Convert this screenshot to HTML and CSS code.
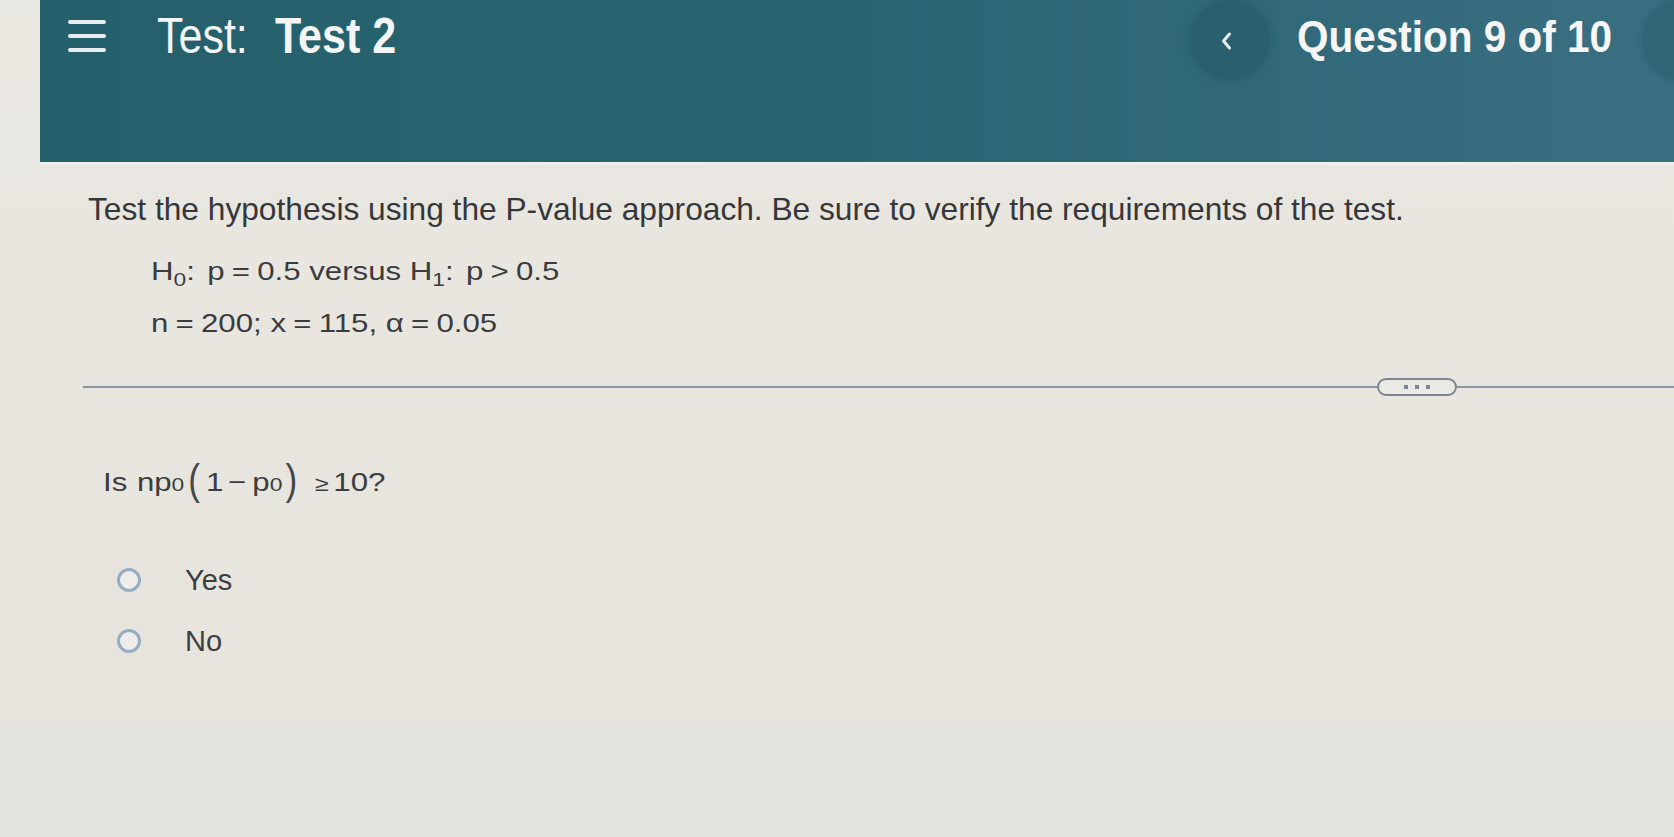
FILE: index.html
```html
<!DOCTYPE html>
<html>
<head>
<meta charset="utf-8">
<link rel="stylesheet" href="styles.css">
</head>
<body>
<div class="page">
  <header class="header">
    <div class="bar">
      <div class="left">
        <div class="burger"><span></span><span></span><span></span></div>
        <div class="title"><span class="t-label">Test:</span><span class="t-name">Test 2</span></div>
      </div>
      <div class="nav">
        <div class="circ">
          <svg width="16" height="22" viewBox="0 0 16 22"><path d="M10.5 4 L4.5 11 L10.5 18" fill="none" stroke="#e9eff2" stroke-width="3" stroke-linecap="round" stroke-linejoin="round"/></svg>
        </div>
        <div class="qnum"><span>Question 9 of 10</span></div>
        <div class="circ circ-r"></div>
      </div>
    </div>
  </header>
  <main class="content">
    <p class="prompt">Test the hypothesis using the P-value approach. Be sure to verify the requirements of the test.</p>
    <div class="math">
      <div class="mline">H<sub>0</sub><span class="colon">:</span> p<span class="op">=</span>0.5 versus H<sub>1</sub><span class="colon">:</span> p<span class="op">&gt;</span>0.5</div>
      <div class="mline">n<span class="op">=</span>200<span class="semi">;</span> x<span class="op">=</span>115, α<span class="op">=</span>0.05</div>
    </div>
    <div class="divider"><span class="line"></span><span class="pill"><i></i><i></i><i></i></span><span class="line line-r"></span></div>
    <div class="ask"><span class="is">Is</span><span class="np">np</span><sub>0</sub><span class="paren">(</span><span class="one">1</span><span class="minus">−</span><span class="p">p</span><sub>0</sub><span class="paren">)</span><span class="ge">≥</span><span class="ten">10?</span></div>
    <div class="options">
      <label class="opt"><span class="radio"></span><span class="otext">Yes</span></label>
      <label class="opt"><span class="radio"></span><span class="otext">No</span></label>
    </div>
  </main>
</div>
</body>
</html>
```
FILE: styles.css
```css
html, body {
  margin: 0;
  padding: 0;
}
body {
  width: 1674px;
  height: 837px;
  overflow: hidden;
  background: linear-gradient(180deg, #e9e7e1 0%, #e8e5de 60%, #e6e4dd 86%, #e2e3de 88%, #e3e4df 100%);
  font-family: "Liberation Sans", Arial, sans-serif;
  color: #333538;
}
.page {
  display: flex;
  flex-direction: column;
  height: 837px;
  overflow: hidden;
}
.header {
  margin-left: 40px;
  height: 162px;
  background: linear-gradient(90deg, #24606b 0%, #296372 45%, #316979 75%, #3a6f82 100%);
  border-bottom: 3px solid #eeeeec;
  overflow: hidden;
}
.bar {
  display: flex;
  justify-content: space-between;
  align-items: center;
  height: 80px;
}
.left {
  display: flex;
  align-items: center;
  padding-left: 28px;
}
.burger {
  display: flex;
  flex-direction: column;
  gap: 10px;
  width: 38px;
  margin-top: -8px;
}
.burger span {
  display: block;
  height: 4px;
  border-radius: 3px;
  background: #e6eef0;
}
.title {
  margin-left: 51px;
  margin-top: -9px;
  font-size: 50px;
  color: #f4f5f5;
  display: flex;
  gap: 26px;
  white-space: nowrap;
}
.title span {
  display: inline-block;
  transform: scaleX(0.86);
  transform-origin: left center;
}
.t-label {
  width: 92px;
}
.t-name {
  width: 123px;
  font-weight: bold;
}
.nav {
  display: flex;
  align-items: center;
}
.circ {
  width: 80px;
  height: 80px;
  border-radius: 50%;
  background: #2a5f6f;
  box-shadow: 0 0 6px 2px rgba(40, 94, 110, 0.6);
  display: flex;
  align-items: center;
  justify-content: center;
  flex-shrink: 0;
}
.circ svg {
  margin-left: -6px;
  margin-top: 2px;
}
.qnum {
  width: 315px;
  margin-left: 27px;
  margin-top: -6px;
  font-weight: bold;
  font-size: 45px;
  color: #f6f6f6;
  white-space: nowrap;
}
.qnum span {
  display: inline-block;
  transform: scaleX(0.9);
  transform-origin: left center;
}
.circ-r {
  margin-left: 31px;
  margin-right: -49px;
  background: #2f6676;
}
.content {
  padding-left: 88px;
  flex: 1;
}
.prompt {
  margin: 26px 0 0 0;
  font-size: 31.7px;
  line-height: 36px;
  color: #35373b;
}
.math {
  margin-top: 18px;
  padding-left: 63px;
  font-size: 26px;
  color: #3a3c40;
}
.mline {
  line-height: 52px;
  height: 52px;
  white-space: nowrap;
  transform: scaleX(1.2);
  transform-origin: left center;
}
.mline sub {
  font-size: 19px;
  vertical-align: -6px;
  line-height: 0;
}
.op {
  margin: 0 6px;
}
.colon {
  margin-right: 3px;
}
.divider {
  display: flex;
  align-items: center;
  margin-top: 28px;
  margin-left: -5px;
  height: 20px;
}
.divider .line {
  flex: 0 0 1294px;
  height: 2px;
  background: #8b94a2;
}
.divider .line-r {
  flex: 1;
}
.pill {
  width: 76px;
  height: 14px;
  border: 2px solid #7b8593;
  border-radius: 9px;
  background: #ebe9e4;
  display: flex;
  align-items: center;
  justify-content: center;
  gap: 7px;
}
.pill i {
  display: block;
  width: 4px;
  height: 4px;
  background: #7c8692;
}
.ask {
  margin-top: 56px;
  margin-left: 15px;
  font-size: 26px;
  color: #3a3c40;
  display: flex;
  align-items: baseline;
  height: 40px;
  white-space: nowrap;
  transform: scaleX(1.2);
  transform-origin: left center;
}
.ask sub {
  font-size: 19px;
  vertical-align: -8px;
  line-height: 0;
}
.ask .np {
  margin-left: 8px;
}
.paren {
  font-size: 42px;
  font-weight: 300;
  margin: 0 1px;
  display: inline-block;
  transform: scaleX(0.7) translateY(3px);
  color: #45474b;
}
.ask .one {
  margin-left: 2px;
}
.ask .minus {
  margin: 0 4px;
}
.ask .p {
  margin-left: 1px;
}
.ask .ge {
  font-size: 21px;
  margin: 0 4px 0 11px;
}
.options {
  margin-top: 70px;
  margin-left: 29px;
  display: flex;
  flex-direction: column;
  gap: 27px;
}
.opt {
  display: flex;
  align-items: center;
  height: 34px;
}
.radio {
  width: 18px;
  height: 18px;
  border: 3px solid #97adc5;
  border-radius: 50%;
  background: #eeedea;
}
.otext {
  margin-left: 44px;
  font-size: 29px;
  color: #3c3e42;
}
```
